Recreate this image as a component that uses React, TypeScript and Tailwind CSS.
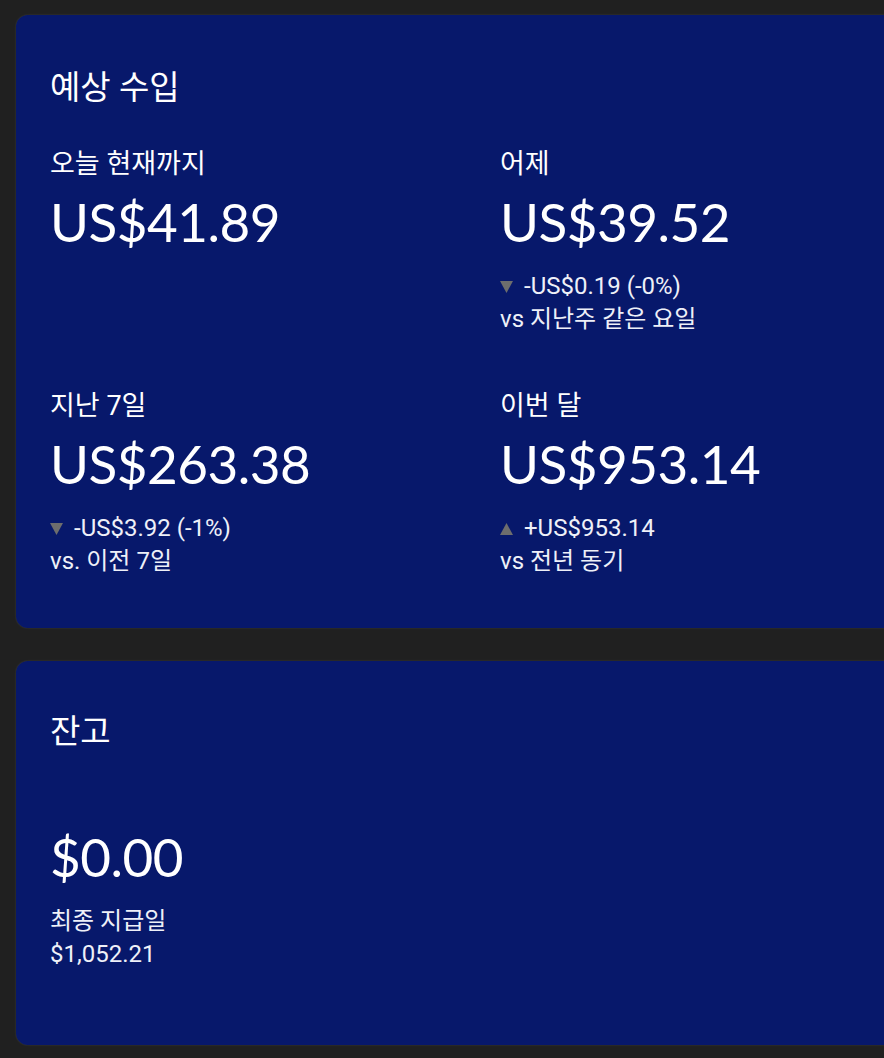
import React from 'react';

interface Metric {
  label: string;
  amount: string;
  delta?: string;
  up?: boolean;
  compare?: string;
}

const metrics: Metric[] = [
  { label: '오늘 현재까지', amount: 'US$41.89' },
  { label: '어제', amount: 'US$39.52', delta: '-US$0.19 (-0%)', up: false, compare: 'vs 지난주 같은 요일' },
  { label: '지난 7일', amount: 'US$263.38', delta: '-US$3.92 (-1%)', up: false, compare: 'vs. 이전 7일' },
  { label: '이번 달', amount: 'US$953.14', delta: '+US$953.14', up: true, compare: 'vs 전년 동기' },
];

const kr = "font-['Roboto','Noto_Sans_CJK_KR',sans-serif]";
const big = "font-['Lato','Noto_Sans_CJK_KR',sans-serif]";

const Triangle: React.FC<{ up?: boolean }> = ({ up }) => (
  <svg width="13" height="12" viewBox="0 0 13 12" className="mr-[11px] shrink-0">
    <path d={up ? 'M6.5 0 L13 12 L0 12 Z' : 'M0 0 L13 0 L6.5 12 Z'} fill="#6d6d6d" />
  </svg>
);

const MetricCell: React.FC<{ m: Metric }> = ({ m }) => (
  <div className="flex flex-col">
    <div className={`${kr} text-[27px] leading-[36px] text-white`}>{m.label}</div>
    <div className={`${big} mt-[8px] text-[53px] leading-[64px] tracking-[-0.5px] text-white`}>{m.amount}</div>
    {m.delta && (
      <>
        <div className={`${kr} mt-[16px] flex items-center text-[24px] leading-[33px] text-[#eef0f8]`}>
          <Triangle up={m.up} />
          {m.delta}
        </div>
        <div className={`${kr} text-[24px] leading-[33px] text-[#eef0f8]`}>{m.compare}</div>
      </>
    )}
  </div>
);

const App: React.FC = () => {
  return (
    <div className="h-[1058px] w-[884px] overflow-hidden bg-[#202020] pl-4 pt-[15px]">
      <div className="w-[920px] rounded-xl bg-[#07186b] pb-[50px] pl-[34px] pt-[53px] shadow-[0_0_2px_rgba(255,255,255,0.15)]">
        <h2 className={`${kr} text-[33px] leading-[40px] text-white`}>예상 수입</h2>
        <div className="mt-[38px] grid grid-cols-[450px_450px] gap-y-[52px]">
          {metrics.map((m) => (
            <MetricCell key={m.label} m={m} />
          ))}
        </div>
      </div>

      <div className="mt-[33px] h-[384px] w-[920px] rounded-xl bg-[#07186b] pl-[34px] pt-[51px] shadow-[0_0_2px_rgba(255,255,255,0.15)]">
        <h2 className={`${kr} text-[33px] leading-[40px] text-white`}>잔고</h2>
        <div className={`${big} mt-[73px] text-[53px] leading-[64px] tracking-[-0.5px] text-white`}>$0.00</div>
        <div className={`${kr} mt-[16px] text-[24px] leading-[33px] text-[#eef0f8]`}>최종 지급일</div>
        <div className={`${kr} text-[24px] leading-[33px] text-[#eef0f8]`}>$1,052.21</div>
      </div>
    </div>
  );
};

export default App;
